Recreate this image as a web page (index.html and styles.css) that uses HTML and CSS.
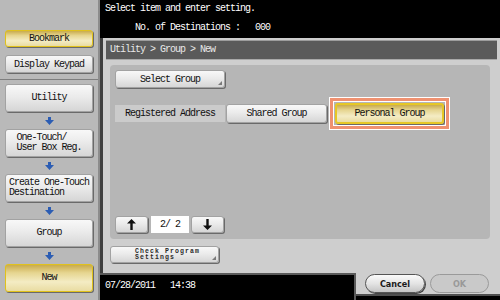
FILE: index.html
```html
<!DOCTYPE html>
<html>
<head>
  <meta charset="UTF-8">
  <title>Utility &gt; Group &gt; New</title>
  <link rel="stylesheet" href="styles.css">
</head>
<body>
  <div class="screen">
    <aside class="sidebar">
      <div class="sidebar-top">
        <div class="key key-yellow bookmark">Bookmark</div>
        <div class="key keypad">Display Keypad</div>
      </div>
      <div class="steps">
        <div class="key step">Utility</div>
        <div class="step-arrow"><svg width="9" height="8" viewBox="0 0 9 8"><polygon points="3,0 6,0 6,3 9,3 4.5,8 0,3 3,3" fill="#2c5db3"/></svg></div>
        <div class="key step"><span class="multi">One-Touch/<br>User Box Reg.</span></div>
        <div class="step-arrow"><svg width="9" height="8" viewBox="0 0 9 8"><polygon points="3,0 6,0 6,3 9,3 4.5,8 0,3 3,3" fill="#2c5db3"/></svg></div>
        <div class="key step"><span class="multi">Create One-Touch<br>Destination</span></div>
        <div class="step-arrow"><svg width="9" height="8" viewBox="0 0 9 8"><polygon points="3,0 6,0 6,3 9,3 4.5,8 0,3 3,3" fill="#2c5db3"/></svg></div>
        <div class="key step">Group</div>
        <div class="step-arrow"><svg width="9" height="8" viewBox="0 0 9 8"><polygon points="3,0 6,0 6,3 9,3 4.5,8 0,3 3,3" fill="#2c5db3"/></svg></div>
        <div class="key key-yellow step">New</div>
      </div>
    </aside>

    <main class="main">
      <header class="message">
        <div class="msg-line">Select item and enter setting.</div>
        <div class="msg-line msg-count">No. of Destinations :   000</div>
      </header>

      <section class="panel">
        <div class="crumbs">Utility &gt; Group &gt; New</div>
        <div class="form-area">
          <div class="key key-drop select-group">Select Group</div>
          <div class="choice-row">
            <div class="choice-label">Registered Address</div>
            <div class="key choice shared">Shared Group</div>
            <div class="mark">
              <div class="key key-yellow choice picked">Personal Group</div>
            </div>
          </div>
          <div class="pager">
            <div class="key page-btn"><svg width="9" height="11" viewBox="0 0 9 11"><polygon points="4.5,0 9,4.6 5.7,4.6 5.7,11 3.3,11 3.3,4.6 0,4.6" fill="#111"/></svg></div>
            <div class="page-num">2/ 2</div>
            <div class="key page-btn"><svg width="9" height="11" viewBox="0 0 9 11"><polygon points="3.3,0 5.7,0 5.7,6.4 9,6.4 4.5,11 0,6.4 3.3,6.4" fill="#111"/></svg></div>
          </div>
        </div>
        <div class="key key-drop check-btn"><span class="small-text">Check Program<br>Settings</span></div>
      </section>

      <footer class="footer">
        <div class="clock">07/28/2011   14:38</div>
        <div class="actions">
          <div class="pill">Cancel</div>
          <div class="pill pill-off">OK</div>
        </div>
      </footer>
    </main>
  </div>
</body>
</html>
```

FILE: styles.css
```css
body {
  margin: 0;
  background: #000;
  font-family: 'Liberation Mono', 'DejaVu Sans Mono', monospace;
  font-size: 10px;
  letter-spacing: -1px;
  color: #111;
}
.screen {
  display: grid;
  grid-template-columns: 100px 400px;
  width: 500px;
  height: 300px;
  overflow: hidden;
}

/* left column */
.sidebar {
  background: #b9b9b9;
  border-right: 2px solid #8c8c8c;
  box-sizing: border-box;
}
.sidebar-top {
  height: 80px;
  box-sizing: border-box;
  padding: 30px 0 0 5px;
  border-bottom: 1px solid #7e7e7e;
  display: flex;
  flex-direction: column;
  gap: 8px;
}
.steps {
  padding: 4px 0 0 5px;
  display: flex;
  flex-direction: column;
}
.step-arrow {
  height: 17px;
  width: 88px;
  display: flex;
  align-items: center;
  justify-content: center;
}

/* buttons */
.key {
  box-sizing: border-box;
  background: linear-gradient(#f8f8f8, #ebebeb 45%, #d6d6d6);
  border: 1px solid #a2a2a2;
  border-radius: 3px;
  box-shadow: 1px 1px 0 #6a6a6a;
  display: flex;
  align-items: center;
  justify-content: center;
  white-space: nowrap;
}
.key-yellow {
  background: linear-gradient(#c9ab4c, #e6d590 30%, #f4ecc4 65%, #e9dca2);
  border: 1px solid #e0c11c;
}
.key-drop {
  position: relative;
}
.key-drop::after {
  content: '';
  position: absolute;
  right: 2px;
  bottom: 2px;
  border-style: solid;
  border-width: 0 0 4px 4px;
  border-color: transparent transparent #7a7a7a transparent;
}
.bookmark {
  width: 88px;
  height: 17px;
}
.keypad {
  width: 88px;
  height: 18px;
}
.step {
  width: 88px;
  height: 28px;
  line-height: 10px;
}
.multi {
  text-align: left;
}

/* right column */
.main {
  display: flex;
  flex-direction: column;
}
.message {
  height: 38px;
  box-sizing: border-box;
  padding: 4px 0 0 5px;
  color: #fff;
}
.msg-line {
  height: 10px;
  line-height: 10px;
  white-space: pre;
}
.msg-count {
  margin-top: 9px;
  padding-left: 30px;
}
.panel {
  height: 235px;
  box-sizing: border-box;
  background: #cecece;
  border-left: 3px solid #3e3e3e;
  padding: 2px 3px 0 3px;
}
.crumbs {
  height: 20px;
  box-sizing: border-box;
  background: #5a5a5a;
  border-top: 1px solid #9c9c9c;
  border-bottom: 1px solid #a8a8a8;
  color: #e8e8e8;
  line-height: 18px;
  padding-left: 4px;
}
.form-area {
  height: 174px;
  box-sizing: border-box;
  margin: 5px 7px 0 4px;
  padding: 5px 5px 6px;
  background: #b6b6b6;
  border-radius: 4px;
  display: flex;
  flex-direction: column;
}
.select-group {
  width: 110px;
  height: 18px;
}
.choice-row {
  display: flex;
  align-items: stretch;
  height: 19px;
  margin-top: 16px;
}
.choice-label {
  width: 110px;
  margin: 1px 0;
  background: #cbcbcb;
  display: flex;
  align-items: center;
  justify-content: center;
}
.shared {
  width: 101px;
  margin-left: 1px;
}
.mark {
  margin: -6px 0 -6px 3px;
  padding: 2px;
  border: 3px solid #ef9170;
  outline: 1px solid #fff;
  box-shadow: inset 0 0 0 1px #fff;
  display: flex;
}
.picked {
  width: 109px;
  border: 2px solid #e6c726;
}
.pager {
  margin-top: auto;
  display: flex;
  height: 17px;
}
.page-btn {
  width: 33px;
  height: 17px;
}
.page-num {
  width: 38px;
  margin: 0 2px 0 3px;
  background: #fff;
  display: flex;
  align-items: center;
  justify-content: center;
  white-space: pre;
}
.check-btn {
  width: 109px;
  height: 17px;
  margin: 7px 0 0 4px;
}
.small-text {
  font-size: 6.5px;
  letter-spacing: 1.1px;
  line-height: 6px;
  font-weight: bold;
  color: #2a2a2a;
  text-align: left;
  margin-left: 6px;
}

/* bottom bar */
.footer {
  height: 27px;
  display: flex;
}
.clock {
  width: 256px;
  box-sizing: border-box;
  border-top: 2px solid #5a5a5a;
  border-right: 2px solid #5a5a5a;
  color: #fff;
  padding: 6px 0 0 5px;
  line-height: 10px;
  white-space: pre;
}
.actions {
  flex: 1;
  height: 23px;
  box-sizing: border-box;
  background: #cecece;
  border-bottom: 2px solid #4e4e4e;
  padding: 1px 0 0 9px;
  display: flex;
  gap: 5px;
  align-items: flex-start;
}
.pill {
  width: 60px;
  height: 19px;
  box-sizing: border-box;
  border: 1px solid #555;
  border-radius: 10px;
  background: linear-gradient(#fafafa, #e4e4e4 50%, #c4c4c4);
  box-shadow: 1px 1px 0 #444;
  font-family: 'DejaVu Sans', sans-serif;
  font-stretch: condensed;
  font-weight: bold;
  font-size: 9px;
  letter-spacing: 0;
  color: #1a1a1a;
  display: flex;
  align-items: center;
  justify-content: center;
}
.pill-off {
  width: 59px;
  border-color: #9a9a9a;
  background: #c9c9c9;
  box-shadow: none;
  color: #999;
}
```
